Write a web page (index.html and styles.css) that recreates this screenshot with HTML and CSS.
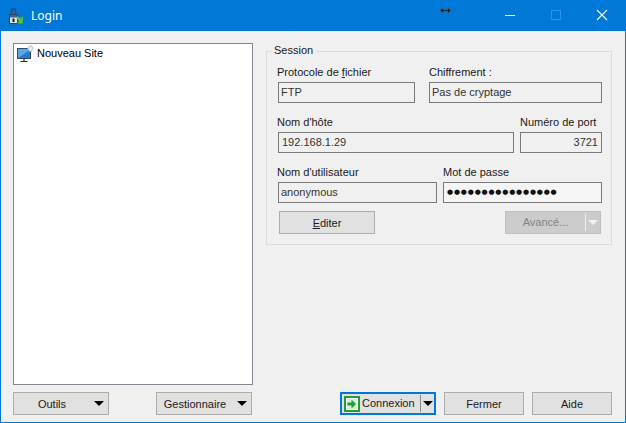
FILE: index.html
```html
<!DOCTYPE html>
<html lang="fr">
<head>
    <meta charset="UTF-8">
    <title>Login</title>
    <link rel="stylesheet" href="styles.css">
</head>
<body>
    <div class="window">
        <div class="titlebar">
            <svg class="app-icon" width="17" height="16" viewBox="0 0 17 16">
                <path d="M2.500 7V3.500C2.500 1.500 3.500.7 4.500.7S6.500 1.500 6.500 3.500V7" fill="none" stroke="#23508f" stroke-width="1.800"/>
                <rect x=".5" y="6.500" width="8" height="9" fill="#dfe3e8" stroke="#39424e"/>
                <rect x="1" y="7" width="7" height="2.500" fill="#41618f"/>
                <rect x="3.500" y="10.500" width="2" height="3.500" fill="#1c1c1c"/>
                <path d="M8.500 8l3 2.500L13.800 8v7.500H8l2.300-2.300L7.500 10.500z" fill="#62c02f"/>
            </svg>
            <span class="title">Login</span>
            <div class="win-controls">
                <svg width="46" height="31" viewBox="0 0 46 31"><path d="M18 15.500h10" stroke="#fff"/></svg>
                <svg width="46" height="31" viewBox="0 0 46 31"><rect x="18.500" y="10.500" width="9" height="9" fill="none" stroke="#2f92e4"/></svg>
                <svg width="46" height="31" viewBox="0 0 46 31"><path d="M18 10l10 10M28 10L18 20" stroke="#fff" stroke-width="1.100"/></svg>
            </div>
        </div>

        <div class="content">
            <div class="left">
                <div class="site-list">
                    <div class="site-item">
                        <svg width="17" height="17" viewBox="0 0 17 17">
                            <rect x=".5" y="3.500" width="13" height="10" fill="#5aa8ea" stroke="#2b4a6f"/>
                            <path d="M1 13l12-8v8z" fill="#2a78c8"/>
                            <path d="M7 14v2M3.500 16.500h7" stroke="#1f2f44" stroke-width="1.200"/>
                            <path d="M12.500.8h2l.4 1.200 1.200.6v2l-1.200.6-.4 1.200h-2l-.4-1.200-1.200-.6v-2l1.200-.6z" fill="#e6ebf1" stroke="#a3afbc" stroke-width=".7"/>
                        </svg>
                        <span>Nouveau Site</span>
                    </div>
                </div>
                <div class="left-buttons">
                    <button class="btn btn-menu">Outils<i class="arrow"></i></button>
                    <button class="btn btn-menu">Gestionnaire<i class="arrow"></i></button>
                </div>
            </div>

            <div class="right">
                <fieldset class="session">
                    <legend>Session</legend>
                    <div class="row">
                        <div class="field w137">
                            <label>Protocole de <u>f</u>ichier</label>
                            <div class="box">FTP</div>
                        </div>
                        <div class="field w173 gap14">
                            <label>Chiffrement :</label>
                            <div class="box">Pas de cryptage</div>
                        </div>
                    </div>
                    <div class="row">
                        <div class="field w236">
                            <label>Nom d'hôte</label>
                            <div class="box pad3">192.168.1.29</div>
                        </div>
                        <div class="field w82 gap6">
                            <label>Numéro de port</label>
                            <div class="box num">3721</div>
                        </div>
                    </div>
                    <div class="row">
                        <div class="field w159">
                            <label>Nom d'utilisateur</label>
                            <div class="box">anonymous</div>
                        </div>
                        <div class="field w159 gap6">
                            <label>Mot de passe</label>
                            <div class="box password">●●●●●●●●●●●●●●●●</div>
                        </div>
                    </div>
                    <div class="session-actions">
                        <button class="btn btn-edit"><u>E</u>diter</button>
                        <button class="btn btn-split disabled"><span class="split-label">Avancé...</span><i class="arrow"></i></button>
                    </div>
                </fieldset>

                <div class="right-buttons">
                    <button class="btn btn-split btn-default">
                        <svg width="16" height="16" viewBox="0 0 16 16">
                            <rect width="16" height="16" fill="#1f9d3a"/>
                            <rect x="2.500" y="2.500" width="11" height="11" fill="#d6f0d2" stroke="#fff"/>
                            <path d="M3.500 6.500h4V3.500L12 8l-4.500 4.500v-3h-4z" fill="#1f9d3a"/>
                        </svg>
                        <span class="split-label">Connexion</span><i class="arrow"></i>
                    </button>
                    <button class="btn btn-small">Fermer</button>
                    <button class="btn btn-small">Aide</button>
                </div>
            </div>
        </div>

        <svg class="cursor" width="11" height="7" viewBox="0 0 14 8">
            <path d="M0 4l4-3.500V3h6V.5L14 4l-4 3.500V5H4v2.500z" fill="#1a1a1a" stroke="#5d8fbd" stroke-width=".4"/>
        </svg>
    </div>
</body>
</html>
```

FILE: styles.css
```css
* {
    box-sizing: border-box;
}

html, body {
    margin: 0;
    height: 100%;
}

body {
    font-family: "Liberation Sans", Arial, sans-serif;
    font-size: 11px;
    color: #1a1a1a;
}

svg {
    flex: none;
}

.window {
    position: relative;
    width: 626px;
    height: 423px;
    display: flex;
    flex-direction: column;
    border: 1px solid #0078d7;
    border-top: none;
    background-color: #f0f0f0;
}

.titlebar {
    height: 31px;
    margin: 0 -1px;
    display: flex;
    align-items: center;
    background-color: #0078d7;
    color: #fff;
}

.app-icon {
    margin-left: 9px;
}

.title {
    margin-left: 5px;
    font-family: "Noto Sans", sans-serif;
    font-size: 12px;
}

.win-controls {
    display: flex;
    margin-left: auto;
    margin-right: 1px;
}

.cursor {
    position: absolute;
    left: 439px;
    top: 7px;
}

.content {
    flex: 1;
    display: flex;
    padding: 12px 13px 7px 12px;
}

.left {
    width: 240px;
    display: flex;
    flex-direction: column;
}

.site-list {
    flex: 1;
    border: 1px solid #828790;
    background-color: #fff;
    padding: 0 3px;
}

.site-item {
    display: flex;
    align-items: center;
    gap: 3px;
    height: 18px;
    color: #000;
}

.left-buttons {
    display: flex;
    justify-content: space-between;
    margin-top: 7px;
    padding-right: 1px;
}

.right {
    width: 346px;
    margin-left: 13px;
    display: flex;
    flex-direction: column;
}

.session {
    margin: 0;
    height: 202px;
    padding: 6px 9px 0 11px;
    border: 1px solid #dcdcdc;
    min-width: 0;
}

.session legend {
    padding: 0 3px 0 2px;
    margin-left: -6px;
    height: 16px;
    line-height: 14px;
}

.row {
    display: flex;
    margin-bottom: 12px;
}

.field label {
    display: block;
    height: 15px;
    margin: 0 0 2px -1px;
    line-height: 14px;
    white-space: nowrap;
}

.w137 { width: 137px; }
.w173 { width: 173px; }
.w236 { width: 236px; }
.w82 { width: 82px; }
.w159 { width: 159px; }
.gap14 { margin-left: 14px; }
.gap6 { margin-left: 6px; }

.gap14 label,
.gap6 label {
    margin-left: 0;
}

.box {
    height: 21px;
    line-height: 19px;
    padding: 0 2px;
    border: 1px solid #7a7a7a;
    background-color: #f0f0f0;
    color: #333;
    white-space: nowrap;
    overflow: hidden;
}

.pad3 {
    padding-left: 3px;
}

.num {
    text-align: right;
    padding-right: 3px;
}

.password {
    background-color: #f5f5f5;
    padding-left: 3px;
    font-family: "DejaVu Sans", sans-serif;
    font-size: 7px;
    letter-spacing: 0.800px;
    color: #111;
}

.session-actions {
    display: flex;
    justify-content: space-between;
    margin-top: -4px;
    padding: 0 1px;
}

.btn {
    height: 23px;
    padding: 0;
    display: flex;
    align-items: center;
    justify-content: center;
    border: 1px solid #adadad;
    background-color: #e1e1e1;
    font-family: inherit;
    font-size: inherit;
    color: #1a1a1a;
}

.btn-menu,
.btn-edit,
.btn-split {
    width: 96px;
}

.btn-menu {
    position: relative;
    padding-right: 18px;
}

.btn-menu .arrow {
    position: absolute;
    right: 4px;
    top: 8px;
}

.arrow {
    width: 0;
    height: 0;
    border-left: 5px solid transparent;
    border-right: 5px solid transparent;
    border-top: 5px solid #000;
}

.btn-split {
    justify-content: flex-start;
}

.split-label {
    flex: 1;
    min-width: 0;
    height: 17px;
    line-height: 17px;
    text-align: center;
    border-right: 1px solid #8a8a8a;
    margin-right: 2px;
}

.disabled {
    background-color: #cccccc;
    border-color: #bfbfbf;
    color: #838383;
}

.disabled .split-label {
    border-right-color: #f0f0f0;
}

.disabled .arrow {
    border-top-color: #f2f2f2;
    margin-right: 2px;
}

.right-buttons {
    display: flex;
    margin-top: auto;
    padding-left: 74px;
    gap: 8px;
}

.btn-default {
    border: 2px solid #0078d7;
    padding-left: 2px;
}

.btn-default .split-label {
    margin-left: 2px;
    padding-right: 6px;
}

.btn-default .arrow {
    margin-right: 1px;
}

.btn-small {
    width: 80px;
}
```
